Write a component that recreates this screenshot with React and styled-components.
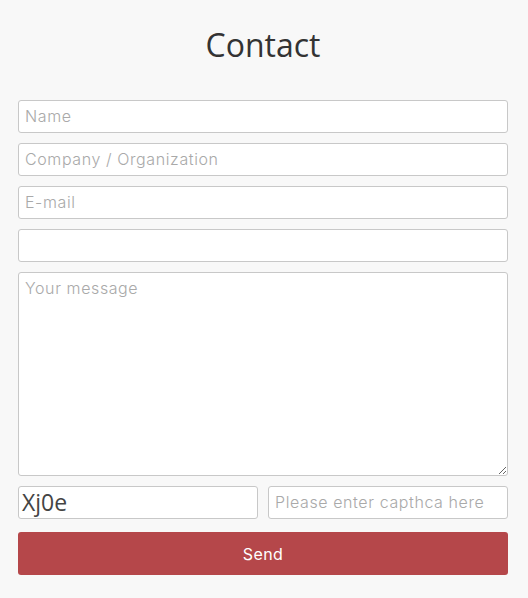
import React from "react";
import styled, { createGlobalStyle } from "styled-components";

const GlobalStyle = createGlobalStyle`
  html, body {
    margin: 0;
    padding: 0;
    background: #f8f8f8;
  }
  * {
    box-sizing: border-box;
  }
`;

const Page = styled.div`
  padding: 0 20px 0 18px;
  font-family: "Inter", "Liberation Sans", sans-serif;
`;

const Title = styled.h1`
  margin: 0;
  height: 100px;
  padding-top: 24px;
  text-align: center;
  font-family: "Open Sans", sans-serif;
  font-weight: 500;
  font-size: 32px;
  line-height: 42px;
  color: #333;
`;

const Form = styled.form`
  display: flex;
  flex-direction: column;
  gap: 10px;
`;

const fieldStyle = `
  width: 100%;
  border: 1px solid #c8c8c8;
  border-radius: 3px;
  background: #fff;
  padding: 0 6px 2px;
  font-family: "Inter", "Liberation Sans", sans-serif;
  font-size: 16px;
  font-weight: 300;
  letter-spacing: 0.6px;
  color: #555;
  outline: none;
  &::placeholder {
    color: #a9a9a9;
  }
`;

const Input = styled.input`
  ${fieldStyle}
  height: 33px;
`;

const Message = styled.textarea`
  ${fieldStyle}
  height: 204px;
  padding: 5px 6px;
  display: block;
  resize: vertical;
`;

const CaptchaRow = styled.div`
  display: grid;
  grid-template-columns: 1fr 1fr;
  gap: 10px;
`;

const Captcha = styled.div`
  height: 33px;
  border: 1px solid #c8c8c8;
  border-radius: 3px;
  background: #fff;
  padding: 0 3px;
  font-family: "Open Sans", sans-serif;
  font-size: 23px;
  line-height: 31px;
  color: #444;
`;

const SendButton = styled.button`
  margin-top: 3px;
  height: 43px;
  border: none;
  border-radius: 3px;
  background: #b5474a;
  color: #fff;
  font-family: "Inter", "Liberation Sans", sans-serif;
  font-size: 16px;
  font-weight: 400;
  letter-spacing: 0.4px;
  cursor: pointer;
`;

export default function App() {
  return (
    <>
      <GlobalStyle />
      <Page>
        <Title>Contact</Title>
        <Form onSubmit={(e) => e.preventDefault()}>
          <Input placeholder="Name" />
          <Input placeholder="Company / Organization" />
          <Input placeholder="E-mail" />
          <Input />
          <Message placeholder="Your message" />
          <CaptchaRow>
            <Captcha>Xj0e</Captcha>
            <Input placeholder="Please enter capthca here" />
          </CaptchaRow>
          <SendButton type="submit">Send</SendButton>
        </Form>
      </Page>
    </>
  );
}
